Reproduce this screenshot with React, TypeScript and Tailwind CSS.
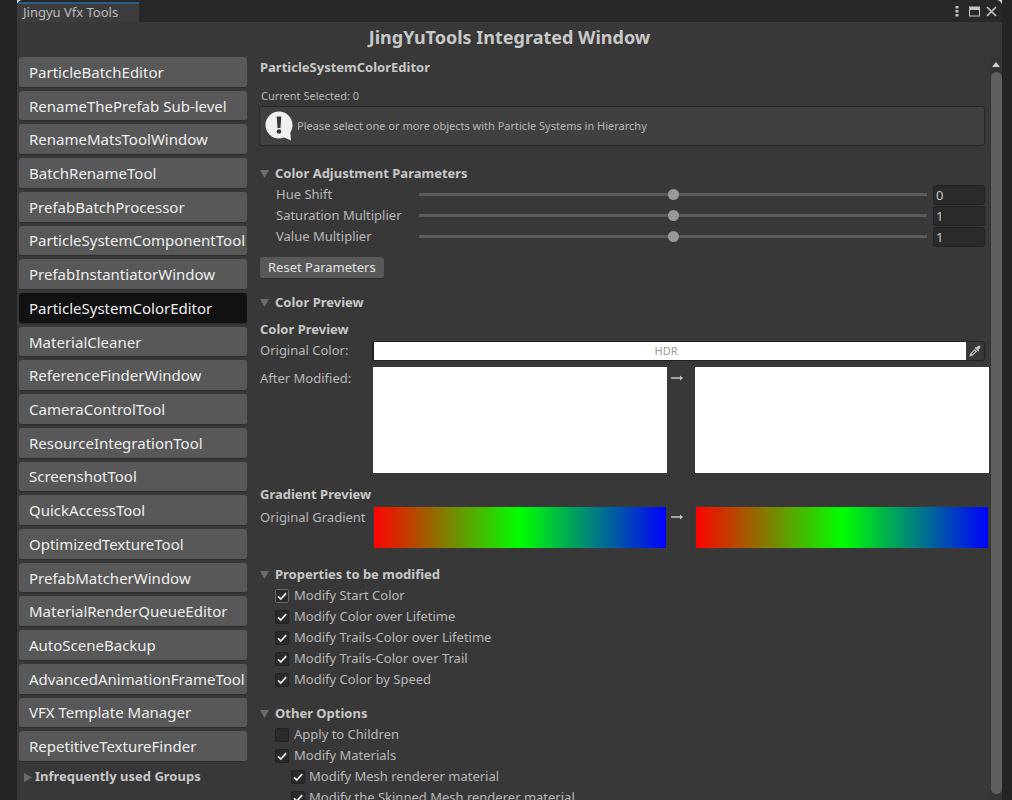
import React, { useState } from "react";

const TOOLS = [
  "ParticleBatchEditor",
  "RenameThePrefab Sub-level",
  "RenameMatsToolWindow",
  "BatchRenameTool",
  "PrefabBatchProcessor",
  "ParticleSystemComponentTool",
  "PrefabInstantiatorWindow",
  "ParticleSystemColorEditor",
  "MaterialCleaner",
  "ReferenceFinderWindow",
  "CameraControlTool",
  "ResourceIntegrationTool",
  "ScreenshotTool",
  "QuickAccessTool",
  "OptimizedTextureTool",
  "PrefabMatcherWindow",
  "MaterialRenderQueueEditor",
  "AutoSceneBackup",
  "AdvancedAnimationFrameTool",
  "VFX Template Manager",
  "RepetitiveTextureFinder",
];

const Foldout: React.FC<{ title: string; className?: string }> = ({ title, className = "" }) => (
  <button type="button" className={`flex h-5 items-center text-left font-bold text-[#c8c8c8] ${className}`}>
    <svg viewBox="0 0 9 8" className="mr-[6px] h-2 w-[9px] shrink-0" fill="#6c6c6c">
      <path d="M0 0h9L4.500 8z" />
    </svg>
    {title}
  </button>
);

interface SliderRowProps {
  id: string;
  label: string;
  min: number;
  max: number;
  initial: number;
}

const SliderRow: React.FC<SliderRowProps> = ({ id, label, min, max, initial }) => {
  const [value, setValue] = useState(String(initial));

  return (
    <div className="flex h-[21px] items-center pl-4">
      <label htmlFor={id} className="w-[143px] shrink-0">
        {label}
      </label>
      <input
        id={id}
        type="range"
        min={min}
        max={max}
        step="any"
        value={Number(value) || 0}
        onChange={(e) => setValue(e.target.value)}
        className="h-3 min-w-0 flex-1 appearance-none bg-transparent [&::-webkit-slider-runnable-track]:h-[3px] [&::-webkit-slider-runnable-track]:bg-[#5a5a5a] [&::-webkit-slider-thumb]:-mt-1 [&::-webkit-slider-thumb]:size-[11px] [&::-webkit-slider-thumb]:appearance-none [&::-webkit-slider-thumb]:rounded-full [&::-webkit-slider-thumb]:bg-[#999999]"
      />
      <input
        type="text"
        aria-label={`${label} value`}
        value={value}
        onChange={(e) => setValue(e.target.value)}
        className="ml-[6px] h-5 w-[52px] rounded-[3px] border border-[#212121] bg-[#2a2a2a] px-[2px] text-[#c8c8c8]"
      />
    </div>
  );
};

interface CheckRowProps {
  label: string;
  checked?: boolean;
  nested?: boolean;
  focused?: boolean;
}

const CheckRow: React.FC<CheckRowProps> = ({ label, checked = true, nested = false, focused = false }) => (
  <label className={`flex h-[21px] items-center ${nested ? "pl-[31px]" : "pl-[15px]"}`}>
    <span className="relative flex">
      <input
        type="checkbox"
        defaultChecked={checked}
        className={`peer size-[14px] appearance-none rounded-[2px] border bg-[#2a2a2a] ${
          focused ? "border-[#6a6a6a]" : "border-[#212121]"
        }`}
      />
      <svg
        viewBox="0 0 14 14"
        className="pointer-events-none absolute inset-0 hidden peer-checked:block"
        fill="none"
        stroke="#e6e6e6"
        strokeWidth="1.800"
      >
        <path d="M3 7.300 5.800 10 11.200 4.200" />
      </svg>
    </span>
    <span className={nested ? "ml-1" : "ml-[5px]"}>{label}</span>
  </label>
);

const Arrow = () => (
  <svg viewBox="0 0 12 6" className="mt-2 ml-1 h-[6px] w-3" fill="#c4c4c4">
    <path d="M0 2.300h9V.500L12 3 9 5.500V3.700H0z" />
  </svg>
);

const gradient =
  "h-[43px] border border-[#3b3b3b] bg-[linear-gradient(to_right,#ff0000,#00ff00_50%,#0000ff)] bg-origin-border";

const App: React.FC = () => {
  const [active, setActive] = useState("ParticleSystemColorEditor");

  return (
    <div className="h-screen overflow-hidden bg-[#242424] pr-[10px] pl-[17px] font-['Noto_Sans','Open_Sans',sans-serif] text-[13px] text-[#b9b9b9]">
      <div className="h-full bg-[#c5dde3]">
        <div className="flex h-full flex-col overflow-hidden rounded-t-md bg-[#383838]">
          <header className="flex h-[22px] shrink-0 items-end justify-between bg-[#282828]">
            <div className="flex h-5 w-[122px] items-center border-t-2 border-[#2c5d87] bg-[#3c3c3c] pl-[6px] text-[#bdbdbd]">
              Jingyu Vfx Tools
            </div>
            <div className="flex h-full items-center gap-[6px] pr-[5px] text-[#c4c4c4]">
              <button type="button" aria-label="Menu" className="mr-1">
                <svg viewBox="0 0 4 12" className="h-3 w-1" fill="currentColor">
                  <path d="M.500 1h3v2.500h-3zM.500 5h3v2.500h-3zM.500 9h3v2.500h-3z" />
                </svg>
              </button>
              <button type="button" aria-label="Maximize">
                <svg viewBox="0 0 11 11" className="size-[11px]" fill="currentColor">
                  <path fillRule="evenodd" d="M0 .500h11v10H0zM1 4v5.500h9V4z" />
                </svg>
              </button>
              <button type="button" aria-label="Close">
                <svg viewBox="0 0 11 11" className="size-[11px]" stroke="currentColor" strokeWidth="1.700">
                  <path d="M1 1l9 9M10 1l-9 9" />
                </svg>
              </button>
            </div>
          </header>

          <h1 className="h-[35px] shrink-0 text-center text-[18px] leading-[31px] font-bold text-[#c8c8c8]">
            JingYuTools Integrated Window
          </h1>

          <div className="flex min-h-0 flex-1">
            <aside className="w-[230px] shrink-0 pl-[2px]">
              <nav className="grid h-[705px] auto-rows-fr gap-[3px]">
                {TOOLS.map((tool) => (
                  <button
                    key={tool}
                    type="button"
                    onClick={() => setActive(tool)}
                    className={`overflow-hidden rounded-[3px] border-b border-[#2c2c2c] pl-[10px] text-left text-[15px] leading-5 whitespace-nowrap text-[#eeeeee] ${
                      tool === active ? "bg-[#111111]" : "bg-[#585858]"
                    }`}
                  >
                    {tool}
                  </button>
                ))}
              </nav>
              <button type="button" className="mt-[5px] flex h-5 items-center pl-[5px] font-bold text-[#c8c8c8]">
                <svg viewBox="0 0 8 9" className="mr-[3px] h-[9px] w-2" fill="#6c6c6c">
                  <path d="M0 0v9l8-4.500z" />
                </svg>
                Infrequently used Groups
              </button>
            </aside>

            <main className="min-w-0 flex-1 overflow-hidden pr-px pl-[13px]">
              <div className="pr-1">
                <h2 className="h-[21px] leading-[21px] font-bold text-[#c8c8c8]">ParticleSystemColorEditor</h2>
                <p className="mt-2 h-5 pl-px text-[11px] leading-5">Current Selected: 0</p>
                <div className="-ml-px flex h-10 items-center rounded-[3px] border border-[#262626] bg-[#404040] pl-[5px] text-[11px]">
                  <svg viewBox="0 0 28 30" className="mr-1 h-[30px] w-7">
                    <path
                      fill="#f0f0f0"
                      d="M14 .500C6.500.500.500 6.500.500 14S6.500 27.500 14 27.500c1.900 0 3.700-.400 5.300-1.100L26 29.500l-.700-7.800c1.400-2.200 2.200-4.900 2.200-7.700C27.500 6.500 21.500.500 14 .500z"
                    />
                    <path fill="#383838" d="M11.700 5.500h4.600l-.800 11.500h-3z" />
                    <circle cx="14" cy="20.500" r="2.300" fill="#383838" />
                  </svg>
                  Please select one or more objects with Particle Systems in Hierarchy
                </div>

                <Foldout title="Color Adjustment Parameters" className="mt-[18px]" />
                <SliderRow id="hue" label="Hue Shift" min={-1} max={1} initial={0} />
                <SliderRow id="saturation" label="Saturation Multiplier" min={0} max={2} initial={1} />
                <SliderRow id="value" label="Value Multiplier" min={0} max={2} initial={1} />
                <button
                  type="button"
                  className="mt-[10px] flex h-[22px] items-center rounded-[3px] border-b border-[#2c2c2c] bg-[#585858] px-2 text-[#e4e4e4]"
                >
                  Reset Parameters
                </button>

                <Foldout title="Color Preview" className="mt-[14px]" />
                <h3 className="mt-[6px] h-5 leading-5 font-bold text-[#c8c8c8]">Color Preview</h3>
                <div className="flex h-6 items-center">
                  <span className="w-28 shrink-0">Original Color:</span>
                  <div className="flex h-5 flex-1 rounded-[3px] border border-[#212121]">
                    <button type="button" className="flex-1 border-l border-[#212121] bg-white pr-2 text-center text-[11px] leading-[18px] text-[#999999]">
                      HDR
                    </button>
                    <button type="button" aria-label="Pick color" className="flex w-[18px] items-center justify-center">
                      <svg viewBox="0 0 12 12" className="size-3" fill="#c4c4c4">
                        <path d="M7.300 2.500 8.800 1a1.500 1.500 0 0 1 2.200 2.200L9.500 4.700l.700.700-1 1L5.600 2.800l1-1z" />
                        <path fillRule="evenodd" d="M5.800 3.900 1.200 8.500.500 11.500l3-.700 4.600-4.600zM5.800 5.500l.700.700-3.200 3.200-.900-.600z" />
                      </svg>
                    </button>
                  </div>
                </div>
              </div>

              <div className="mt-1 grid grid-cols-[113px_1fr_28px_1fr]">
                <span className="pt-[2px]">After Modified:</span>
                <div className="h-[106px] bg-white" />
                <Arrow />
                <div className="h-[106px] bg-white" />
              </div>

              <h3 className="mt-[11px] h-5 leading-5 font-bold text-[#c8c8c8]">Gradient Preview</h3>
              <div className="mt-[2px] grid grid-cols-[113px_1fr_28px_1fr]">
                <span className="pt-[2px] whitespace-nowrap">Original Gradient</span>
                <div className={gradient} />
                <Arrow />
                <div className={gradient} />
              </div>

              <Foldout title="Properties to be modified" className="mt-4" />
              <CheckRow label="Modify Start Color" focused />
              <CheckRow label="Modify Color over Lifetime" />
              <CheckRow label="Modify Trails-Color over Lifetime" />
              <CheckRow label="Modify Trails-Color over Trail" />
              <CheckRow label="Modify Color by Speed" />

              <Foldout title="Other Options" className="mt-[14px]" />
              <CheckRow label="Apply to Children" checked={false} />
              <CheckRow label="Modify Materials" />
              <CheckRow label="Modify Mesh renderer material" nested />
              <CheckRow label="Modify the Skinned Mesh renderer material" nested />
            </main>

            <div className="flex w-3 shrink-0 flex-col items-center bg-[#353535] pt-[5px] pb-[6px]">
              <svg viewBox="0 0 8 5" className="mb-[5px] h-[5px] w-2" fill="#d0d0d0">
                <path d="M0 5h8L4 0z" />
              </svg>
              <div className="w-[11px] flex-1 rounded-full bg-[#5f5f5f]" />
            </div>
          </div>
        </div>
      </div>
    </div>
  );
};

export default App;
